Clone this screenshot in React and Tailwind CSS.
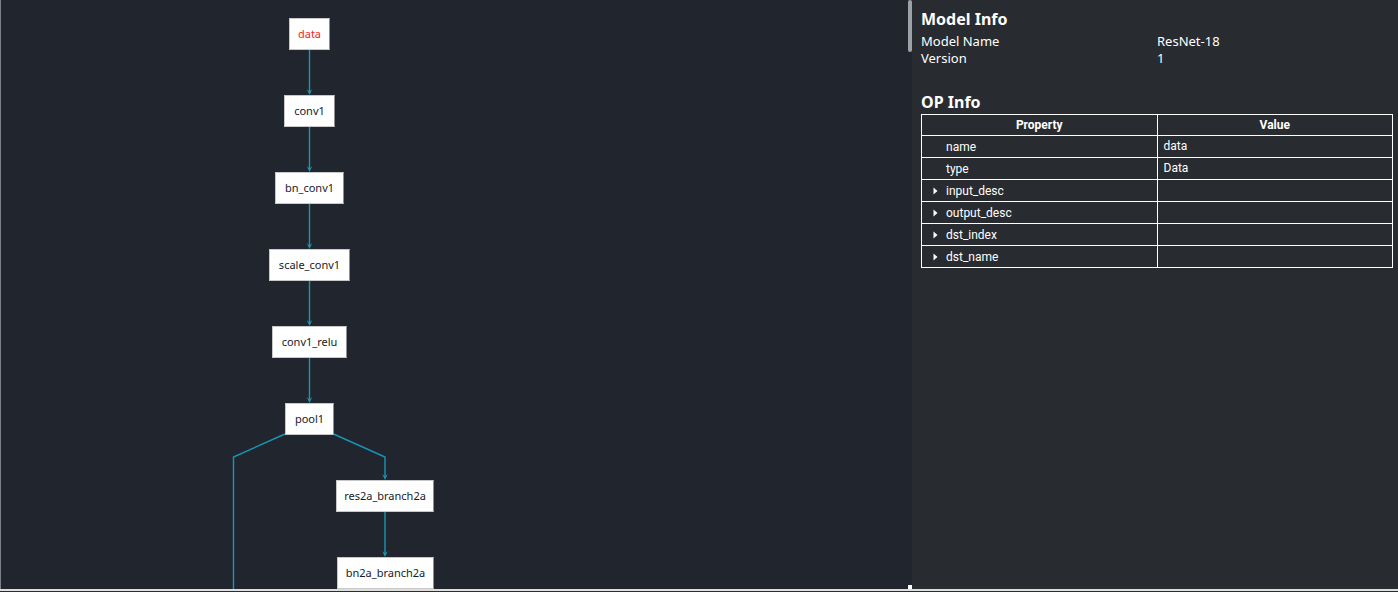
import React from "react";

const nodes = [
  { label: "data", cls: "left-[288px] top-[18px] w-[41px]", red: true },
  { label: "conv1", cls: "left-[283px] top-[95px] w-[51px]" },
  { label: "bn_conv1", cls: "left-[274px] top-[172px] w-[69px]" },
  { label: "scale_conv1", cls: "left-[268px] top-[249px] w-[81px]" },
  { label: "conv1_relu", cls: "left-[271px] top-[326px] w-[75px]" },
  { label: "pool1", cls: "left-[284px] top-[403px] w-[49px]" },
  { label: "res2a_branch2a", cls: "left-[335px] top-[480px] w-[98px]" },
  { label: "bn2a_branch2a", cls: "left-[336px] top-[557px] w-[97px]" },
];

const arrow = (x, y) => `M${x - 2.8} ${y - 6} L${x} ${y} L${x + 2.8} ${y - 6} L${x} ${y - 3.5} Z`;

function Graph() {
  const c = "#1896b6";
  const mainX = 308.5;
  const verticals = [
    [50, 95],
    [127, 172],
    [204, 249],
    [281, 326],
    [358, 403],
  ];
  return (
    <div className="relative h-full w-[912px] shrink-0 bg-[#21252e] border-l border-[#7d8088] overflow-hidden">
      <svg className="absolute left-0 top-0" width="912" height="589">
        {verticals.map(([a, b], i) => (
          <g key={i}>
            <line x1={mainX} y1={a} x2={mainX} y2={b - 2} stroke={c} strokeWidth="1.4" />
            <path d={arrow(mainX, b)} fill={c} />
          </g>
        ))}
        <polyline points="284,434 232.5,457 232.5,589" fill="none" stroke={c} strokeWidth="1.4" />
        <polyline points="332.5,434 384,457 384,478" fill="none" stroke={c} strokeWidth="1.4" />
        <path d={arrow(384, 480)} fill={c} />
        <line x1="384" y1="511" x2="384" y2="555" stroke={c} strokeWidth="1.4" />
        <path d={arrow(384, 557)} fill={c} />
      </svg>
      {nodes.map((n) => (
        <div
          key={n.label}
          className={`absolute ${n.cls} h-[32px] bg-white border border-[#c8c8c8] border-r-[#8e8e8e] flex items-center justify-center text-[11px] font-['Noto_Sans',sans-serif] ${n.red ? "text-[#ff1a1a]" : "text-[#161a28]"}`}
        >
          {n.label}
        </div>
      ))}
      <div className="absolute right-0 top-0 w-[4px] h-[52px] rounded-full bg-[#9ea1a7]" />
      <div className="absolute right-0 bottom-0 w-[4px] h-[4px] bg-white" />
    </div>
  );
}

function Tri() {
  return (
    <svg width="5" height="8" viewBox="0 0 5 8" className="absolute left-[11px] top-1/2 -translate-y-1/2">
      <path d="M0.5 0.5 L4.5 4 L0.5 7.5 Z" fill="#ffffff" />
    </svg>
  );
}

function InfoPanel() {
  const rows = [
    { k: "name", v: "data" },
    { k: "type", v: "Data" },
    { k: "input_desc", v: "", exp: true },
    { k: "output_desc", v: "", exp: true },
    { k: "dst_index", v: "", exp: true },
    { k: "dst_name", v: "", exp: true },
  ];
  return (
    <div className="flex-1 h-full bg-[#282c31] pl-[9px] pr-[5px] pt-[8px] text-white">
      <div className="font-['Noto_Sans',sans-serif]">
        <h2 className="text-[16px] font-bold leading-[22px]">Model Info</h2>
        <div className="grid grid-cols-2 text-[13px] leading-[17px] mt-[3px]">
          <div>Model Name</div>
          <div>ResNet-18</div>
          <div>Version</div>
          <div>1</div>
        </div>
        <h2 className="text-[16px] font-bold leading-[22px] mt-[24px]">OP Info</h2>
      </div>
      <table className="w-full mt-[1px] border-collapse table-fixed font-['Roboto',sans-serif] text-[12px]">
        <thead>
          <tr>
            <th className="border border-white h-[21px] font-bold p-0 leading-[19px]">Property</th>
            <th className="border border-white h-[21px] font-bold p-0 leading-[19px]">Value</th>
          </tr>
        </thead>
        <tbody>
          {rows.map((r) => (
            <tr key={r.k}>
              <td className="relative border border-white h-[22px] p-0 pl-[24px] leading-[20px]">
                {r.exp && <Tri />}
                {r.k}
              </td>
              <td className="border border-white h-[22px] p-0 pl-[6px] pb-[2px] leading-[18px]">{r.v}</td>
            </tr>
          ))}
        </tbody>
      </table>
    </div>
  );
}

export default function App() {
  return (
    <div className="w-[1398px] h-[592px] flex flex-col overflow-hidden bg-[#282c31]">
      <div className="flex h-[589px]">
        <Graph />
        <InfoPanel />
      </div>
      <div className="h-[2px] bg-[#dedede]" />
      <div className="h-[1px] bg-[#2a2d31]" />
    </div>
  );
}
